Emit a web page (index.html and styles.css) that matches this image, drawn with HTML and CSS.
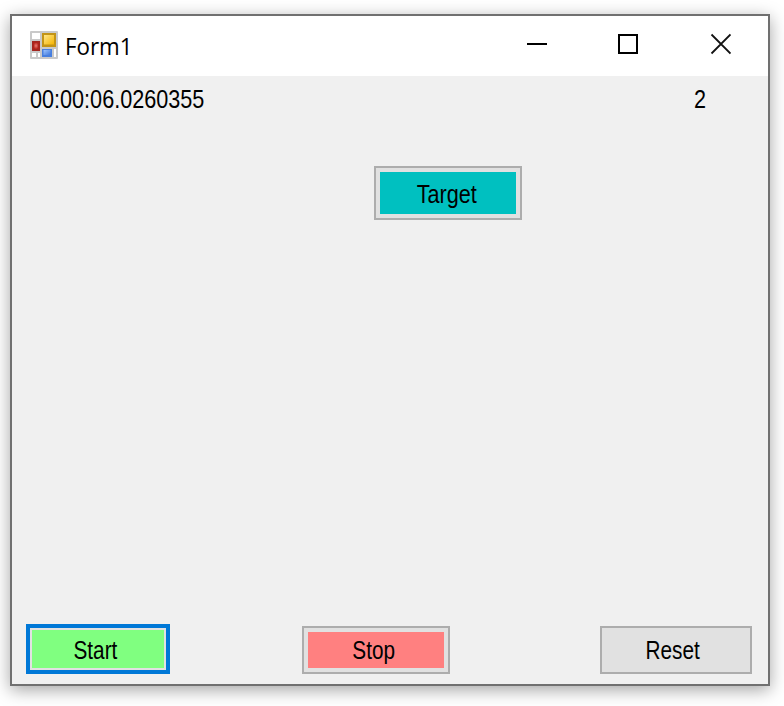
FILE: index.html
```html
<!DOCTYPE html>
<html lang="en">
<head>
<meta charset="utf-8">
<title>Form1</title>
<link rel="stylesheet" href="styles.css">
</head>
<body>
<main class="window">
  <header class="titlebar">
    <svg class="app-icon" width="28" height="28" viewBox="0 0 28 28">
      <defs>
        <linearGradient id="gold" x1="0" y1="0" x2="1" y2="1"><stop offset="0" stop-color="#ffe68a"/><stop offset="1" stop-color="#f5b400"/></linearGradient>
        <linearGradient id="blue" x1="0" y1="0" x2="1" y2="1"><stop offset="0" stop-color="#9cc4ff"/><stop offset="1" stop-color="#3f78dc"/></linearGradient>
        <radialGradient id="red"><stop offset="0" stop-color="#e88078"/><stop offset="1" stop-color="#b8261c"/></radialGradient>
      </defs>
      <rect width="28" height="28" rx="1" fill="#c9c9c9"/>
      <path d="M2 2h8v6H2zM2 22h4v4H2zM8 22h2v4H8zM24 18h2v8h-2z" fill="#fff"/>
      <rect x="12" y="2" width="14" height="14" fill="#c39416"/>
      <rect x="14" y="4" width="10" height="9.500" fill="url(#gold)"/>
      <rect x="2" y="10" width="8" height="10" fill="#a32620"/>
      <rect x="3.500" y="11.500" width="5" height="6.500" fill="url(#red)"/>
      <rect x="12" y="18" width="10" height="8" fill="#477fdf"/>
      <rect x="13.500" y="19" width="7" height="5" fill="url(#blue)"/>
    </svg>
    <h1 class="title"><span>Form1</span></h1>
    <svg class="controls" width="204" height="22" viewBox="0 0 204 22">
      <path d="M0 11h20M92 2h18v18H92z" fill="none" stroke="#000" stroke-width="2"/>
      <path d="M184.500 1.500l19 19M203.500 1.500l-19 19" fill="none" stroke="#111" stroke-width="1.800"/>
    </svg>
  </header>
  <section class="client">
    <div class="status">
      <span class="label elapsed">00:00:06.0260355</span>
      <span class="label score">2</span>
    </div>
    <div class="field">
      <button class="button target"><span class="label">Target</span></button>
    </div>
    <footer class="actions">
      <button class="button start"><span class="label">Start</span></button>
      <button class="button stop"><span class="label">Stop</span></button>
      <button class="button reset"><span class="label">Reset</span></button>
    </footer>
  </section>
</main>
</body>
</html>
```

FILE: styles.css
```css
* {
  box-sizing: border-box;
}

body {
  margin: 0;
  padding: 14px 14px 20px 10px;
  height: 706px;
  overflow: hidden;
  background: #fff;
  color: #000;
  font-family: "Liberation Sans", Arial, sans-serif;
}

.window {
  display: flex;
  flex-direction: column;
  width: 760px;
  height: 672px;
  border: 2px solid #707070;
  background: #f0f0f0;
  box-shadow: 0 4px 16px rgba(0, 0, 0, 0.36);
}

.titlebar {
  display: flex;
  flex: none;
  height: 60px;
  padding: 15px 37px 0 18px;
  background: #fff;
}

.title {
  margin: -1px 0 0 7px;
  font: 400 23.500px/32px "Open Sans", sans-serif;
}

.title span {
  display: inline-block;
  transform: scaleX(0.95);
  transform-origin: left;
}

.controls {
  margin: 2px 0 0 auto;
}

.client {
  display: flex;
  flex: 1;
  flex-direction: column;
}

.label {
  display: inline-block;
  font-size: 25px;
  line-height: 28px;
  white-space: nowrap;
  transform: scaleX(0.865);
}

.status {
  display: flex;
  justify-content: space-between;
  height: 90px;
  padding: 9px 62px 0 18px;
}

.elapsed {
  transform-origin: left;
}

.score {
  transform-origin: right;
}

.field {
  flex: 1;
  padding-left: 362px;
}

.button {
  display: flex;
  align-items: center;
  justify-content: center;
  width: 148px;
  height: 48px;
  padding: 0 4px 0 0;
  border: 2px solid #adadad;
  background: #e1e1e1;
  color: #000;
  font-family: inherit;
  box-shadow: inset 0 0 0 4px #e1e1e1;
}

.target {
  height: 54px;
  padding: 1px 3px 0 0;
  background: #00c0c0;
}

.actions {
  display: flex;
  align-items: flex-end;
  padding: 0 16px 10px 14px;
}

.start {
  width: 144px;
  height: 50px;
  padding: 2px 6px 0 0;
  border: 4px solid #0078d7;
  background: #80ff80;
  box-shadow: inset 0 0 0 2px #e1e1e1;
}

.stop {
  margin: 0 auto 0 132px;
  background: #ff8080;
}

.reset {
  width: 152px;
  padding-right: 6px;
}

.start .label,
.stop .label,
.reset .label {
  transform: scaleX(0.83);
}
```
